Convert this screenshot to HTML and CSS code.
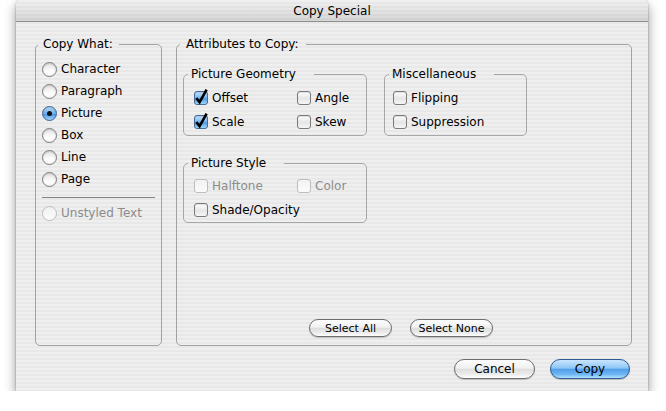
FILE: index.html
```html
<!DOCTYPE html>
<html>
<head>
<meta charset="utf-8">
<title>Copy Special</title>
<link rel="stylesheet" href="styles.css">
</head>
<body>
<div class="window">
  <div class="titlebar">Copy Special</div>
  <div class="content">
    <div class="groups">
      <fieldset class="group group-what">
        <legend>Copy What:</legend>
        <ul class="radios">
          <li class="radio-row"><span class="radio"></span>Character</li>
          <li class="radio-row"><span class="radio"></span>Paragraph</li>
          <li class="radio-row"><span class="radio on"></span>Picture</li>
          <li class="radio-row"><span class="radio"></span>Box</li>
          <li class="radio-row"><span class="radio"></span>Line</li>
          <li class="radio-row"><span class="radio"></span>Page</li>
          <li class="separator"></li>
          <li class="radio-row disabled"><span class="radio"></span>Unstyled Text</li>
        </ul>
      </fieldset>
      <fieldset class="group group-attrs">
        <legend>Attributes to Copy:</legend>
        <div class="subrow">
          <fieldset class="sub sub-geom">
            <legend>Picture Geometry</legend>
            <div class="checks">
              <div class="check-row"><span class="checkbox checked"><svg width="14" height="17" viewBox="0 0 14 17"><path d="M2.3 10.2 L5.6 14.2 L12.6 1.6" fill="none" stroke="#000" stroke-width="2.6"/></svg></span>Offset</div>
              <div class="check-row"><span class="checkbox"></span>Angle</div>
              <div class="check-row"><span class="checkbox checked"><svg width="14" height="17" viewBox="0 0 14 17"><path d="M2.3 10.2 L5.6 14.2 L12.6 1.6" fill="none" stroke="#000" stroke-width="2.6"/></svg></span>Scale</div>
              <div class="check-row"><span class="checkbox"></span>Skew</div>
            </div>
          </fieldset>
          <fieldset class="sub sub-misc">
            <legend>Miscellaneous</legend>
            <div class="checks single">
              <div class="check-row"><span class="checkbox"></span>Flipping</div>
              <div class="check-row"><span class="checkbox"></span>Suppression</div>
            </div>
          </fieldset>
        </div>
        <fieldset class="sub sub-style">
          <legend>Picture Style</legend>
          <div class="checks style-checks">
            <div class="check-row disabled"><span class="checkbox"></span>Halftone</div>
            <div class="check-row disabled"><span class="checkbox"></span>Color</div>
            <div class="check-row span2"><span class="checkbox"></span>Shade/Opacity</div>
          </div>
        </fieldset>
        <div class="btnrow">
          <div class="btn">Select All</div>
          <div class="btn">Select None</div>
        </div>
      </fieldset>
    </div>
    <div class="footer">
      <div class="btn btn-lg btn-cancel">Cancel</div>
      <div class="btn btn-lg btn-default">Copy</div>
    </div>
  </div>
</div>
</body>
</html>
```
FILE: styles.css
```css
* { box-sizing: border-box; }
html, body { margin: 0; padding: 0; background: #fff; }
body {
  font-family: "DejaVu Sans", "Liberation Sans", sans-serif;
  font-size: 12px;
  color: #000;
}

.window {
  margin-left: 16px;
  width: 632px;
  height: 391px;
  border-radius: 5px 5px 0 0;
  overflow: hidden;
  background: repeating-linear-gradient(#efefef 0 2px, #e8e8e8 2px 4px);
  box-shadow: 0 5px 12px rgba(0,0,0,0.42), 0 0 2px rgba(0,0,0,0.35);
}

.titlebar {
  height: 22px;
  line-height: 22px;
  text-align: center;
  border-bottom: 1px solid #8e8e8e;
  background:
    linear-gradient(rgba(255,255,255,0.35), rgba(0,0,0,0.08)),
    repeating-linear-gradient(#e9e9e9 0 2px, #e1e1e1 2px 4px);
}

.content { padding: 15px 16px 0 19px; }

.groups { display: flex; gap: 14px; height: 309px; }

fieldset { margin: 0; padding: 0; min-width: 0; }
legend { font-size: 12px; line-height: 14px; }

.group {
  height: 309px;
  border: 1px solid #a2a2a2;
  border-radius: 5px;
}
.group legend { margin-left: 2px; padding: 0 6px 0 5px; }
.group-what { width: 127px; }
.group-attrs { width: 456px; }
.group-attrs legend { margin-left: 3px; padding: 0 7px 0 6px; }

.radios { list-style: none; margin: 0; padding: 7px 6px 0 6px; }
.radio-row { display: flex; align-items: center; gap: 4px; height: 22px; }
.radio {
  width: 15px; height: 15px;
  border-radius: 50%;
  border: 1px solid #7a7a7a;
  background: linear-gradient(#e4e4e4, #ffffff 70%, #f4f4f4);
  box-shadow: inset 0 1px 2px rgba(0,0,0,0.15);
  display: flex; align-items: center; justify-content: center;
}
.radio.on {
  border-color: #3f628f;
  background: linear-gradient(#bfe0fa, #6cb0ee 50%, #4b97e4 55%, #9fd4fb);
}
.radio.on::after {
  content: "";
  width: 5px; height: 5px;
  border-radius: 50%;
  background: #111;
}
.separator { height: 0; border-top: 1px solid #858585; margin: 7px 0 4px; }
.disabled { color: #8c8c8c; }
.disabled .radio, .disabled .checkbox {
  border-color: #bdbdbd;
  background: linear-gradient(#f2f2f2, #fbfbfb);
  box-shadow: none;
}

.subrow { display: flex; gap: 17px; margin: 16px 0 0 6px; align-items: flex-start; }
.sub { border: 1px solid #a7a7a7; border-radius: 5px; }
.sub legend { margin-left: 4px; padding: 0 18px 0 3px; }
.sub-geom { width: 184px; }
.sub-misc { width: 143px; }
.sub-style { width: 184px; margin: 20px 0 0 6px; }

.checks {
  display: grid;
  grid-template-columns: 103px auto;
  grid-auto-rows: 24px;
  padding: 5px 0 1px 10px;
}
.checks.single { grid-template-columns: auto; padding-left: 8px; }
.checks.style-checks { padding: 4px 0 0 10px; }
.span2 { grid-column: 1 / 3; }

.check-row { display: flex; align-items: center; gap: 4px; }
.checkbox {
  width: 14px; height: 14px;
  border: 1px solid #7b7b7b;
  border-radius: 3px;
  background: linear-gradient(#ffffff, #e6e6e6 55%, #f6f6f6);
  box-shadow: inset 0 1px 1px rgba(0,0,0,0.12);
  display: flex; justify-content: center; align-items: flex-end;
  flex: none;
}
.checkbox.checked {
  border-color: #46699a;
  background: linear-gradient(#c3e2fb, #75b6f0 50%, #4f9ae6 55%, #a3d6fb);
}
.checkbox svg { flex: none; display: block; margin-bottom: -1px; }

.btnrow {
  display: flex;
  justify-content: center;
  gap: 18px;
  margin-top: 96px;
  padding-right: 6px;
}
.btn {
  width: 83px;
  height: 18px;
  border-radius: 9px;
  border: 1px solid #6e6e6e;
  font-size: 11px;
  display: flex; align-items: center; justify-content: center;
  background: linear-gradient(#fdfdfd, #f0f0f0 45%, #dedede 52%, #ececec 80%, #ffffff);
  box-shadow: 0 1px 1px rgba(0,0,0,0.2);
}

.footer {
  display: flex;
  justify-content: flex-end;
  gap: 15px;
  margin-top: 13px;
  padding-right: 2px;
}
.btn-lg { height: 20px; border-radius: 10px; font-size: 12px; }
.btn-cancel { width: 81px; }
.btn-default {
  width: 80px;
  border-color: #2f5a92;
  background: linear-gradient(#c9e6fd, #8ec6f5 45%, #519fea 52%, #6fb6f3 80%, #b2e2ff);
}
```
